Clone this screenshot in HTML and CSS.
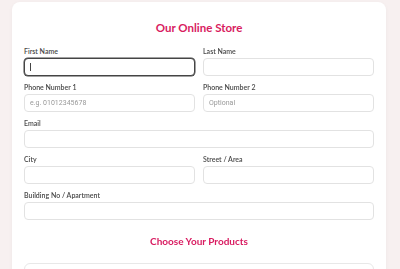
FILE: index.html
```html
<!DOCTYPE html>
<html lang="en">
  <head>
    <meta charset="UTF-8" />
    <meta name="viewport" content="width=device-width, initial-scale=1.0" />
    <title>Our Online Store</title>
    <link rel="stylesheet" href="styles.css">
  </head>
  <body>
    <div class="card">
      <h1 class="title">Our Online Store</h1>
      <form id="orderForm" class="form-grid">
        <div class="field">
          <label for="firstName">First Name</label>
          <input type="text" id="firstName" class="focused" autofocus />
        </div>
        <div class="field">
          <label for="lastName">Last Name</label>
          <input type="text" id="lastName" />
        </div>
        <div class="field">
          <label for="phone1">Phone Number 1</label>
          <input type="text" id="phone1" placeholder="e.g. 01012345678" />
        </div>
        <div class="field">
          <label for="phone2">Phone Number 2</label>
          <input type="text" id="phone2" placeholder="Optional" />
        </div>
        <div class="field full">
          <label for="email">Email</label>
          <input type="text" id="email" />
        </div>
        <div class="field">
          <label for="city">City</label>
          <input type="text" id="city" />
        </div>
        <div class="field">
          <label for="street">Street / Area</label>
          <input type="text" id="street" />
        </div>
        <div class="field full">
          <label for="building">Building No / Apartment</label>
          <input type="text" id="building" />
        </div>
      </form>

      <h2 class="subtitle">Choose Your Products</h2>
      <div class="products"></div>
    </div>
  </body>
</html>
```

FILE: styles.css
```css
body {
  margin: 0;
  background-color: #f7f0f0;
  font-family: Lato, "Noto Sans", sans-serif;
  color: #333;
  overflow: hidden;
}
.card {
  margin: 2px 14px 0 12px;
  padding: 12px 12px 20px;
  background-color: #fff;
  border-radius: 8px;
  box-shadow: 0 1px 4px rgba(0, 0, 0, 0.04);
}
.title {
  margin: 7px 0 13px;
  text-align: center;
  font-size: 11.5px;
  font-weight: 700;
  color: #d81b60;
}
.form-grid {
  display: grid;
  grid-template-columns: 1fr 1fr;
  column-gap: 8px;
  row-gap: 7px;
}
.field.full {
  grid-column: 1 / 3;
}
label {
  display: block;
  margin-bottom: 3px;
  font-size: 7px;
  color: #484848;
  font-weight: 600;
}
input[type="text"] {
  display: block;
  width: 100%;
  height: 18px;
  padding: 0 5px;
  border: 1px solid #e2e2e2;
  border-radius: 4px;
  box-sizing: border-box;
  font-family: Roboto, "Liberation Sans", sans-serif;
  font-size: 7px;
  color: #333;
  background: #fff;
  outline: none;
}
input::placeholder {
  color: #999;
}
/* focused field with its text caret */
input.focused {
  border: 1px solid #444;
  box-shadow: 0 0 0 0.5px #444;
  background: #fff linear-gradient(#444, #444) no-repeat 5px 50% / 1px 8px;
}
.subtitle {
  margin: 15px 0 16px;
  text-align: center;
  font-size: 10px;
  font-weight: 700;
  color: #d81b60;
}
.products {
  height: 40px;
  border: 1px solid #e8e8e8;
  border-radius: 6px;
}
```
